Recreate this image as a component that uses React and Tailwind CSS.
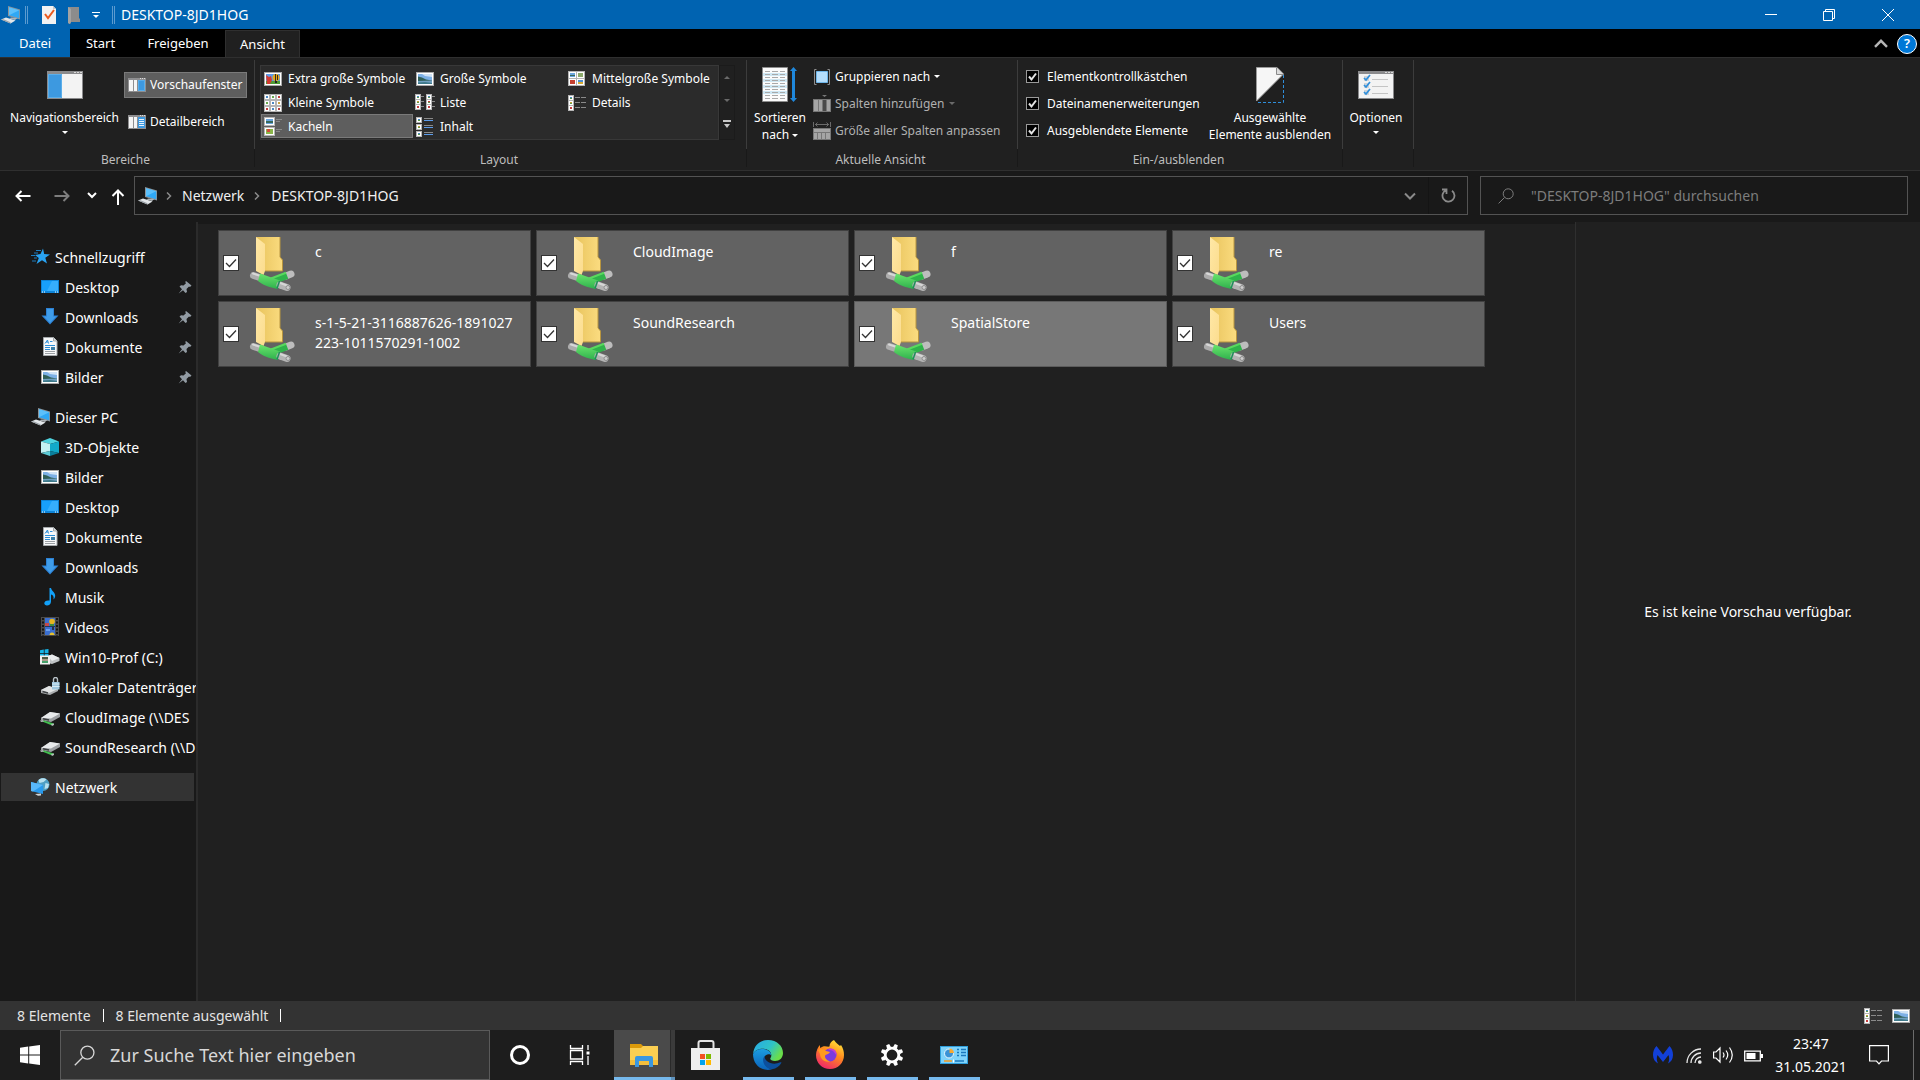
import React from "react";

/* ---------- icons ---------- */

function PcIcon({ className = "" }) {
  return (
    <svg width="20" height="20" viewBox="0 0 20 20" className={className} aria-hidden="true">
      <path d="M7 1 19 4.500V14.500L7 11Z" fill="#8d9499" />
      <path d="M8 2.300 18.200 5.300V13.300L8 10.300Z" fill="#2fa8f5" />
      <path d="M8 2.300 18.200 5.300 8 10.300Z" fill="#5cc0fb" />
      <path d="M10 12.500 16.500 13 14 15 8.500 13.500Z" fill="#aeb4b8" />
      <path d="M0 14.500 5 12.500 14.500 15.500 9.500 18.500Z" fill="#e3e7ea" />
      <path d="M0 14.500 9.500 18.500V17.300L2.500 14.200Z" fill="#9aa1a6" />
    </svg>
  );
}

function StarIcon() {
  return (
    <svg width="20" height="20" viewBox="0 0 20 20" aria-hidden="true">
      <path d="M12 1.500 13.200 7 19 7.500 14.300 10.800 16 16.500 11 13.300 5.500 17 7.800 11 4 8 9.500 7Z" fill="#29a3f2" />
      <path d="M5 3.500H10M3 6H7M0 8.500H4M3 11H6M1 14H5" stroke="#1b7fc4" strokeWidth="1" />
    </svg>
  );
}

function DesktopIcon() {
  return (
    <svg width="20" height="20" viewBox="0 0 20 20" aria-hidden="true">
      <path d="M1 3H19V16H1Z" fill="#0d84d8" />
      <path d="M2 4H18V14H2Z" fill="#18a0fb" />
      <path d="M12 4H18V14H7Z" fill="#36aefc" />
      <path d="M2 15H3M4 15H5M15 15H16M17 15H18" stroke="#fff" strokeWidth="1" />
    </svg>
  );
}

function DownloadIcon() {
  return (
    <svg width="20" height="20" viewBox="0 0 20 20" aria-hidden="true">
      <path d="M6 1H14V8.500H18.500L10 17.500 1.500 8.500H6Z" fill="#2c81d4" />
      <path d="M7 2H13V9.500H16L10 16 4 9.500H7Z" fill="#3f9ce9" />
    </svg>
  );
}

function DocumentIcon() {
  return (
    <svg width="20" height="20" viewBox="0 0 20 20" aria-hidden="true">
      <path d="M3.500 .5H13.500L17 4V18.500H3.500Z" fill="#f7f8f9" stroke="#a4a8ab" />
      <path d="M13.500 .5V4H17" fill="#d5d9dc" stroke="#a4a8ab" />
      <path d="M5 6.500 7.500 3 8.500 6.500M6 5H8" stroke="#2c8ed8" fill="none" />
      <path d="M10 4.500H12.500M5 8.500H15M5 10.500H10M5 12.500H10" stroke="#2c8ed8" />
      <path d="M11 10H15V13H11Z" fill="#3b7fa8" />
      <path d="M5 14.500H15M5 16.500H15" stroke="#9b9fa3" />
    </svg>
  );
}

function PictureIcon({ className = "" }) {
  return (
    <svg width="20" height="20" viewBox="0 0 20 20" className={className} aria-hidden="true">
      <path d="M1 3H19V17H1Z" fill="#a9a9a9" />
      <path d="M2 4H18V16H2Z" fill="#fff" />
      <path d="M3 5H17V15H3Z" fill="#7db0e6" />
      <path d="M7 5H17V8L10 7Z" fill="#cfe2f5" />
      <path d="M3 7.500 7 8.500 11 10.500 17 11.500V12.500H3Z" fill="#2f5f58" />
      <path d="M3 12 17 11.500V15H3Z" fill="#6f9fc0" />
      <path d="M3 13.500 10 13 17 14V15H3Z" fill="#3f7a8a" />
    </svg>
  );
}

function CubeIcon() {
  return (
    <svg width="20" height="20" viewBox="0 0 20 20" aria-hidden="true">
      <path d="M10 1 19 4.500 10 7 1 4.500Z" fill="#4fd3df" />
      <path d="M1 4.500 10 7V14L1 16Z" fill="#c4f2f3" />
      <path d="M10 7 19 4.500V16L10 14Z" fill="#12a9c9" />
      <path d="M1 16 10 14V19Z" fill="#5ccbd6" />
      <path d="M19 16 10 14V19Z" fill="#0a7f9c" />
    </svg>
  );
}

function MusicIcon() {
  return (
    <svg width="20" height="20" viewBox="0 0 20 20" aria-hidden="true">
      <path d="M9.500 1H11C11.500 4 15.500 5.500 15.200 9 15 10.500 14.500 11.500 13.500 12.500 14 9.500 13 8 11 7.500V14.500C11 17 9 18.500 7 18.500 5.300 18.500 4.300 17.500 4.300 16.300 4.300 14.500 6.500 13 9.500 13.600Z" fill="#12a0f7" />
    </svg>
  );
}

function VideoIcon() {
  return (
    <svg width="20" height="20" viewBox="0 0 20 20" aria-hidden="true">
      <path d="M1 0H19V19H1Z" fill="#4b4b4b" />
      <path d="M5 1H15V18H5Z" fill="#3b6fd0" />
      <path d="M5 9H15V10H5Z" fill="#22355c" />
      <circle cx="12" cy="4.500" r="2.800" fill="#e6b51e" />
      <path d="M5 6H9V9H5Z" fill="#c34a4a" />
      <path d="M10 7H14V9H10Z" fill="#3f8b3c" />
      <path d="M12 10H14V13H12Z" fill="#26304a" />
      <path d="M9.500 18A2.500 2.500 0 0 1 14.500 18Z" fill="#e6c22e" />
      <path d="M6 12H10V14H6Z" fill="#6ba1ee" />
      <path d="M3 1V19M17 1V19" stroke="#151515" strokeWidth="2" strokeDasharray="2 1.500" />
    </svg>
  );
}

function WinDriveIcon() {
  return (
    <svg width="20" height="20" viewBox="0 0 20 20" aria-hidden="true">
      <path d="M8 9 12 7.500 19.500 11V14L12 17 8 16Z" fill="#bfc2c4" />
      <path d="M8 9 12 7.500 19.500 11 12 14Z" fill="#e9ebec" />
      <path d="M0 3.200 3.800 2.600V6H0ZM4.600 2.500 8.500 2V6H4.600ZM0 6.800H3.800V9H0ZM4.600 6.800H8.500V9H4.600Z" fill="#16b5e9" />
      <path d="M0 8.500H10V17.500H0Z" fill="#f1f1f1" />
      <path d="M2 10H8V16H2Z" fill="#a99a88" />
      <path d="M2 10H8V12H2Z" fill="#4b5a44" />
      <path d="M2 14H8V16H2Z" fill="#46a06a" />
    </svg>
  );
}

function LockedDriveIcon() {
  return (
    <svg width="20" height="20" viewBox="0 0 20 20" aria-hidden="true">
      <path d="M1 13 9 9 18 12V14L10 18 1 16Z" fill="#aaadaf" />
      <path d="M1 13 9 9 18 12 9 16Z" fill="#e2e4e5" />
      <path d="M2.500 14.500 8 16" stroke="#3f4244" strokeWidth="1.500" />
      <path d="M13.500 5V2.500C13.500 -.2 17.500 -.2 17.500 2.500V5" stroke="#b9c2c8" fill="none" strokeWidth="1.400" />
      <path d="M12 5H19.500V12.500H12Z" fill="#9fc6dd" />
      <path d="M12 7H19.500M12 9.500H19.500" stroke="#d8ebf5" />
    </svg>
  );
}

function NetDriveIcon() {
  return (
    <svg width="20" height="20" viewBox="0 0 20 20" aria-hidden="true">
      <path d="M1 11 10 5 20 6.500V10L11 15 1 13Z" fill="#9da0a3" />
      <path d="M1 11 10 5 20 6.500 11 11.500Z" fill="#e8eaeb" />
      <path d="M3 11.800 9 13" stroke="#3a3d3f" strokeWidth="1.500" />
      <path d="M1 14 4 13.500 14 16.500 12 18.500Z" fill="#43bf50" />
      <path d="M0 13.500 3 13 4 14.500 1 15Z" fill="#b5b8ba" />
      <path d="M11 17 14 16.500 14 18 12 19Z" fill="#b5b8ba" />
    </svg>
  );
}

function NetworkIcon() {
  return (
    <svg width="20" height="20" viewBox="0 0 20 20" aria-hidden="true">
      <circle cx="12" cy="7.500" r="6.500" fill="#4f9fc4" />
      <path d="M7.500 3C9.500 1 13.500 .8 15.500 2.500L12.500 5 8.500 6ZM14.500 6 18 7 17 11 13.500 12Z" fill="#b8e0ef" />
      <path d="M0 5 12 8V17L0 14Z" fill="#2899ec" />
      <path d="M0 5 12 8 2 14.500 0 14Z" fill="#58b8fa" />
      <path d="M4 17 10 16.500 10 18.500 7 18.800Z" fill="#cfd6da" />
    </svg>
  );
}

function PinIcon() {
  return (
    <svg width="14" height="14" viewBox="0 0 14 14" aria-hidden="true">
      <path d="M8 1 13.500 5.500 12 7 11 6.500 8.500 9 9 12 7.500 13 5 10.200 .7 13.500 4 9.200 1.500 6.500 3 5.300 5.500 5.500 8 3.300 7.200 2Z" fill="#929ba3" />
    </svg>
  );
}

function NetFolderIcon() {
  return (
    <svg width="48" height="56" viewBox="0 0 48 56" aria-hidden="true">
      <defs>
        <linearGradient id="fb" x1="0" x2="1">
          <stop offset="0" stopColor="#e8c35c" />
          <stop offset="1" stopColor="#fbdc80" />
        </linearGradient>
        <linearGradient id="ff" x1="0" x2="1" y1="0" y2="1">
          <stop offset="0" stopColor="#ffe8a6" />
          <stop offset="1" stopColor="#fbdc8e" />
        </linearGradient>
        <linearGradient id="fp" x1="0" x2="0" y1="0" y2="1">
          <stop offset="0" stopColor="#d5d5d5" />
          <stop offset="1" stopColor="#9a9a9a" />
        </linearGradient>
        <linearGradient id="fg" x1="0" x2="0" y1="0" y2="1">
          <stop offset="0" stopColor="#6ae56c" />
          <stop offset="1" stopColor="#2fb04d" />
        </linearGradient>
      </defs>
      <path d="M7 1H31V21L33.500 24V35H12Z" fill="url(#fb)" />
      <path d="M31 1V21L33.500 24V35H16" stroke="#b8953f" fill="none" />
      <path d="M7 1 16 8V35L14.500 39 7 35Z" fill="url(#ff)" />
      <path d="M37 40 42 38" stroke="#bdbdbd" strokeWidth="7" strokeLinecap="round" />
      <path d="M24 45 38 39.500" stroke="#2fb34a" strokeWidth="7" />
      <path d="M22 42.500 37 36.800" stroke="#58d95e" strokeWidth="2" />
      <path d="M4.500 39.500 12 42" stroke="#adadad" strokeWidth="7" strokeLinecap="round" />
      <path d="M4 37.500 11 39.800" stroke="#d8d8d8" strokeWidth="2" strokeLinecap="round" />
      <path d="M11 37.500 31 44.500 28.500 53C20 51.500 13 48.500 9 45Z" fill="url(#fg)" />
      <path d="M31 49 38 51.500" stroke="#b4b4b4" strokeWidth="7" strokeLinecap="round" />
      <path d="M31 47 38 49.500" stroke="#d6d6d6" strokeWidth="2" />
      <path d="M30.500 45 28 52.500" stroke="#1e8f5a" strokeWidth="1.500" />
      <circle cx="39" cy="51.500" r="2" fill="#cdcdcd" stroke="#909090" />
    </svg>
  );
}

function WindowFrame({ children, w = 36, h = 28 }) {
  return (
    <svg width={w} height={h} viewBox="0 0 36 28" aria-hidden="true">
      <path d="M0 0H36V28H0Z" fill="#8a8a8c" />
      <path d="M1 3H35V27H1Z" fill="#f3f3f3" />
      <path d="M27 1.500H29M30 1.500H32M33 1.500H35" stroke="#d9d9d9" />
      {children}
    </svg>
  );
}

function NavPaneIcon() {
  return (
    <WindowFrame>
      <path d="M1 3H15V27H1Z" fill="#3d99e0" />
      <path d="M1.500 3.500H14.500V26.500H1.500Z" fill="none" stroke="#5aaeea" />
    </WindowFrame>
  );
}

function PaneIcon({ detail }) {
  return (
    <svg width="18" height="14" viewBox="0 0 18 14" aria-hidden="true">
      <path d="M0 0H18V14H0Z" fill="#8f8f91" />
      <path d="M1 2H5V13H1ZM6 2H9V13H6Z" fill="#f5f5f5" />
      <path d="M10 2H17V13H10Z" fill="#3d99e0" />
      <path d="M12 .5H13M14 .5H15M16 .5H17" stroke="#ddd" />
      {detail ? (
        <path d="M11 4.500H16M11 6.500H16M11 8.500H16M11 10.500H16" stroke="#e8f4fd" />
      ) : (
        <path d="M10.500 2.500H16.500V12.500H10.500Z" fill="none" stroke="#5aaeea" />
      )}
    </svg>
  );
}

function Thumb({ x, y, c = "#4b88c4", g = "#5f9a4c" }) {
  return (
    <g>
      <rect x={x} y={y} width="6" height="6" fill="#b5b5b5" />
      <rect x={x + 1} y={y + 1} width="4" height="4" fill="#fff" />
      <rect x={x + 2} y={y + 2} width="2" height="2" fill={c} />
      <rect x={x + 2} y={y + 3} width="2" height="1" fill={g} />
    </g>
  );
}

function ExtraLargeIcon() {
  return (
    <svg width="20" height="20" viewBox="0 0 20 20" aria-hidden="true">
      <path d="M1 3H19V17H1Z" fill="#a9a9a9" />
      <path d="M2 4H18V16H2Z" fill="#fff" />
      <path d="M3 5H17V15H3Z" fill="#5d9bea" />
      <path d="M3 12H17V15H3Z" fill="#4d9b35" />
      <path d="M3 6 6 8 8 7 9 11 7 15H4Z" fill="#d33b31" />
      <circle cx="13" cy="8.500" r="3.500" fill="#e5a91c" />
      <path d="M12 5H13V12H12ZM14 6H15V11H14Z" fill="#3b2b18" />
      <path d="M12 12H14V14H12Z" fill="#222" />
    </svg>
  );
}

function SmallIconsIcon() {
  const cols = ["#4b88c4", "#69a94e", "#c43e3e", "#69a94e", "#4b88c4", "#c9a13d", "#c43e3e", "#4b88c4", "#b53a3a"];
  return (
    <svg width="20" height="20" viewBox="0 0 20 20" aria-hidden="true">
      {cols.map((c, i) => (
        <Thumb key={i} x={(i % 3) * 6 + 1} y={Math.floor(i / 3) * 6 + 1} c={c} g={c} />
      ))}
    </svg>
  );
}

function TilesIcon() {
  return (
    <svg width="20" height="20" viewBox="0 0 20 20" aria-hidden="true">
      <path d="M1 0H12V9H1ZM1 10H12V19H1Z" fill="#b5b5b5" />
      <path d="M2 1H11V8H2ZM2 11H11V18H2Z" fill="#fff" />
      <path d="M3 2H10V7H3Z" fill="#6aa5dd" />
      <path d="M3 4H10V6H3Z" fill="#38695c" />
      <path d="M3 12H10V17H3Z" fill="#8ab54a" />
      <path d="M4 12H7V15H4Z" fill="#d04b38" />
      <path d="M13 2.500H19M13 4.500H17M13 12.500H19M13 14.500H17" stroke="#8a8a8a" />
    </svg>
  );
}

function ListViewIcon() {
  return (
    <svg width="20" height="20" viewBox="0 0 20 20" aria-hidden="true">
      <Thumb x={0} y={1} />
      <Thumb x={0} y={6} c="#c9a13d" />
      <Thumb x={0} y={11} c="#c43e3e" g="#c43e3e" />
      <Thumb x={11} y={1} />
      <Thumb x={11} y={6} c="#c43e3e" />
      <Thumb x={11} y={11} c="#c43e3e" g="#c43e3e" />
      <path d="M6 3.500H9M6 8.500H9M6 13.500H9M17 3.500H20M17 8.500H20M17 13.500H20" stroke="#8a8a8a" />
    </svg>
  );
}

function ContentIcon() {
  return (
    <svg width="20" height="20" viewBox="0 0 20 20" aria-hidden="true">
      <Thumb x={1} y={0} />
      <Thumb x={1} y={7} c="#c9a13d" />
      <Thumb x={1} y={14} />
      <path d="M9 1.500H18M9 8.500H18M9 15.500H18" stroke="#8a8a8a" />
      <path d="M9 3.500H18M9 10.500H18M9 17.500H18" stroke="#5b9bea" />
    </svg>
  );
}

function MediumIcon() {
  return (
    <svg width="20" height="20" viewBox="0 0 20 20" aria-hidden="true">
      <path d="M1 2H18V17H1Z" fill="#b5b5b5" />
      <path d="M2 3H9V9H2ZM10 3H17V9H10ZM2 10H9V16H2ZM10 10H17V16H10Z" fill="#fff" />
      <path d="M3 4H8V8H3Z" fill="#6aa5dd" />
      <path d="M11 4H16V8H11Z" fill="#8aa86a" />
      <path d="M3 11H8V15H3Z" fill="#c5402f" />
      <path d="M11 11H16V15H11Z" fill="#4f8fd2" />
      <path d="M11 13H16V15H11Z" fill="#d8ab30" />
      <path d="M3 6H8V7H3Z" fill="#38695c" />
    </svg>
  );
}

function DetailsIcon({ className = "" }) {
  return (
    <svg width="20" height="20" viewBox="0 0 20 20" className={className} aria-hidden="true">
      <Thumb x={1} y={2} />
      <Thumb x={1} y={7} c="#c9a13d" />
      <Thumb x={1} y={12} c="#c43e3e" g="#c43e3e" />
      <path d="M8 4.500H13M14 4.500H19M8 9.500H13M14 9.500H19M8 14.500H13M14 14.500H19" stroke="#8a8a8a" />
    </svg>
  );
}

function SortIcon() {
  return (
    <svg width="36" height="36" viewBox="0 0 36 36" aria-hidden="true">
      <path d="M.5 .5H25.500V34.500H.5Z" fill="#fbfbfb" stroke="#8d8d8d" />
      <path d="M1 6H25V9H1ZM1 12H25V15H1ZM1 18H25V21H1ZM1 24H25V27H1Z" fill="#cfe8f4" />
      <path
        d="M3 4.500H8M10 4.500H16M18 4.500H23M3 7.500H8M10 7.500H16M18 7.500H23M3 10.500H8M10 10.500H16M18 10.500H23M3 13.500H8M10 13.500H16M18 13.500H23M3 16.500H8M10 16.500H16M18 16.500H23M3 19.500H8M10 19.500H16M18 19.500H23M3 22.500H8M10 22.500H16M18 22.500H23M3 25.500H8M10 25.500H16M18 25.500H23M3 28.500H8M10 28.500H16M18 28.500H23M3 31.500H8M10 31.500H16M18 31.500H23"
        stroke="#a9a9a9"
      />
      <path d="M31.500 0 35 4H33V31H35L31.500 35 28 31H30V4H28Z" fill="#1f88dc" />
    </svg>
  );
}

function GroupIcon() {
  return (
    <svg width="18" height="18" viewBox="0 0 18 18" aria-hidden="true">
      <path d="M3.500 1.500H1.500V16.500H3.500M14.500 1.500H16.500V16.500H14.500" fill="none" stroke="#8d8d8d" />
      <path d="M3.500 3.500H14.500V14.500H3.500Z" fill="#b5defc" stroke="#6fb6ea" />
    </svg>
  );
}

function AddColumnsIcon() {
  return (
    <svg width="18" height="18" viewBox="0 0 18 18" aria-hidden="true">
      <path d="M0 4H18V17H0Z" fill="#777" />
      <path d="M1 5H5V16H1ZM6 5H9V16H6ZM14 5H17V16H14Z" fill="#a5a5a5" />
      <path d="M10 5H13V16H10Z" fill="#4a4a4a" />
      <path d="M9 0H14L11.500 2Z" fill="#777" />
    </svg>
  );
}

function SizeColumnsIcon() {
  return (
    <svg width="18" height="18" viewBox="0 0 18 18" aria-hidden="true">
      <path d="M.5 0V5M17.500 0V5M2 2.500H16M4.500 .5 2.500 2.500 4.500 4.500M13.500 .5 15.500 2.500 13.500 4.500" stroke="#6a6a6a" fill="none" />
      <path d="M0 6H18V18H0Z" fill="#777" />
      <path d="M1 7H17V10H1ZM1 11H4V17H1ZM5 11H8V17H5ZM9 11H12V17H9ZM13 11H17V17H13Z" fill="#a5a5a5" />
    </svg>
  );
}

function HideIcon() {
  return (
    <svg width="28" height="36" viewBox="0 0 28 36" aria-hidden="true">
      <path d="M.5 .5H21L27.500 7 .5 34Z" fill="#f6f6f6" stroke="#9a9a9a" />
      <path d="M20.500 .5V7.500H27.500" fill="#dcdcdc" stroke="#8a8a8a" />
      <path d="M27.500 8V35.500H1" fill="none" stroke="#2f8fdc" strokeDasharray="3 2" />
    </svg>
  );
}

function OptionsIcon() {
  return (
    <WindowFrame>
      {[7, 14, 21].map((y) => (
        <g key={y}>
          <rect x="6" y={y - 2} width="5" height="5" fill="#d0d4d8" />
          <path d={`M6 ${y} 8 ${y + 2} 12 ${y - 3}`} stroke="#2f8fdc" strokeWidth="1.700" fill="none" />
          <path d={`M14 ${y + 1.5}H30`} stroke="#c4c4c4" />
        </g>
      ))}
    </WindowFrame>
  );
}

function Caret({ className = "" }) {
  return (
    <svg width="6" height="3" viewBox="0 0 6 3" className={className} aria-hidden="true">
      <path d="M0 0H6L3 3Z" fill="currentColor" />
    </svg>
  );
}

function SearchGlyph({ size = 16, className = "" }) {
  return (
    <svg width={size} height={size} viewBox="0 0 16 16" fill="none" stroke="currentColor" className={className} aria-hidden="true">
      <circle cx="10.200" cy="5.800" r="5" />
      <path d="M6.500 9.500 .6 15.400" />
    </svg>
  );
}

/* ---------- title bar and tabs ---------- */

function TitleBar() {
  return (
    <header className="flex h-[29px] items-center bg-[#0063b1] text-white">
      <PcIcon className="ml-px" />
      <span className="ml-1 h-[18px] w-[3px] border-x border-[#5c9bd0]" />
      <button aria-label="Eigenschaften" className="ml-[14px]">
        <svg width="14" height="18" viewBox="0 0 14 18">
          <path d="M0 0H11L14 3V18H0Z" fill="#f2f2f2" />
          <path d="M11 0V3H14" fill="#c9c9c9" />
          <path d="M3 8 6 12 12 4" fill="none" stroke="#ea5a1e" strokeWidth="2" />
        </svg>
      </button>
      <button aria-label="Neuer Ordner" className="ml-3">
        <svg width="12" height="18" viewBox="0 0 12 18">
          <path d="M0 1H11V12L12 13V16H3L2 18 0 17Z" fill="#8c8c8c" />
          <path d="M0 1 3 3V16L2 18 0 17Z" fill="#a3a3a3" />
        </svg>
      </button>
      <button aria-label="Symbolleiste anpassen" className="ml-3">
        <svg width="8" height="8" viewBox="0 0 8 8">
          <path d="M0 1.500H8" stroke="#fff" />
          <path d="M1 4H7L4 7Z" fill="#fff" />
        </svg>
      </button>
      <span className="ml-3 h-[18px] w-[3px] border-x border-[#5c9bd0]" />
      <h1 className="ml-[6px] text-[14px]">DESKTOP-8JD1HOG</h1>
      <div className="ml-auto flex h-full pr-[2px]">
        <button aria-label="Minimieren" className="flex w-[58px] items-center justify-center">
          <span className="h-px w-3 bg-white" />
        </button>
        <button aria-label="Verkleinern" className="flex w-[58px] items-center justify-center">
          <svg width="12" height="12" viewBox="0 0 12 12" fill="none" stroke="#fff">
            <path d="M.5 2.500H9.500V11.500H.5ZM2.500 2.500V.5H11.500V9.500H9.500" />
          </svg>
        </button>
        <button aria-label="Schließen" className="flex w-[60px] items-center justify-center">
          <svg width="12" height="12" viewBox="0 0 12 12" fill="none" stroke="#fff">
            <path d="M0 0 12 12M12 0 0 12" />
          </svg>
        </button>
      </div>
    </header>
  );
}

function Tabs() {
  return (
    <div className="flex h-7 bg-black pt-px text-[13px] text-white" role="tablist">
      <button role="tab" className="-mt-px w-[70px] bg-[#0063b1] pt-px">Datei</button>
      <button role="tab" className="w-[61px]">Start</button>
      <button role="tab" className="w-[94px]">Freigeben</button>
      <button role="tab" aria-selected="true" className="-mb-px w-[75px] border border-b-0 border-[#2f2f2f] bg-[#202020]">
        Ansicht
      </button>
      <div className="ml-auto flex items-center gap-[9px] pr-[3px]">
        <button aria-label="Menüband minimieren">
          <svg width="14" height="9" viewBox="0 0 14 9" fill="none" stroke="#b5b5b5" strokeWidth="2.400">
            <path d="M1 7.800 7 1.800 13 7.800" />
          </svg>
        </button>
        <button aria-label="Hilfe" className="flex size-5 items-center justify-center rounded-full border border-white bg-[#0078d7] text-[13px] font-semibold leading-none">
          ?
        </button>
      </div>
    </div>
  );
}

/* ---------- ribbon ---------- */

function Group({ label, className = "", children }) {
  return (
    <section className={`flex flex-col ${className}`}>
      <div className="flex h-[89px] border-r border-[#3c3c3c]">{children}</div>
      <div className="h-[18px] border-r border-[#191919] pr-[3px] text-center text-[12px] leading-[22px] text-[#bdbdbd]">{label}</div>
    </section>
  );
}

function GalleryItem({ icon, label, active }) {
  return (
    <button
      aria-pressed={!!active}
      className={`flex h-6 items-center gap-[5px] whitespace-nowrap border pl-px pt-[2px] text-left ${
        active ? "border-[#7a7a7a] bg-[#5e5e5e]" : "border-transparent"
      }`}
    >
      {icon}
      {label}
    </button>
  );
}

function RibbonCheck({ label }) {
  return (
    <label className="flex h-[27px] items-center gap-2">
      <span className="relative flex">
        <input type="checkbox" defaultChecked className="size-[13px] appearance-none border border-[#9a9a9a] bg-black" />
        <svg width="13" height="13" viewBox="0 0 13 13" className="pointer-events-none absolute inset-0">
          <path d="M3 6.500 5.500 9.500 10 3.500" fill="none" stroke="#e4e4e4" strokeWidth="2" />
        </svg>
      </span>
      <span className="pt-px">{label}</span>
    </label>
  );
}

function Ribbon() {
  return (
    <div className="flex h-[114px] border-y border-[#2f2f2f] bg-[#202020] pt-[2px] text-[12px] text-white">
      <Group label="Bereiche" className="w-[255px]">
        <button className="flex w-[119px] flex-col items-center pl-[10px] pt-[11px]">
          <NavPaneIcon />
          <span className="mt-[10px] leading-[17px]">Navigationsbereich</span>
          <Caret className="mt-[5px] shrink-0" />
        </button>
        <div className="ml-[5px] flex flex-col gap-[10px] whitespace-nowrap pt-3">
          <button aria-pressed="true" className="flex h-[26px] w-[123px] items-center gap-1 border border-[#7a7a7a] bg-[#5e5e5e] pl-[3px]">
            <PaneIcon />
            Vorschaufenster
          </button>
          <button className="flex h-[26px] items-center gap-1 pl-1 pt-px">
            <PaneIcon detail />
            Detailbereich
          </button>
        </div>
      </Group>

      <Group label="Layout" className="w-[492px]">
        <div className="ml-[5px] mt-[5px] grid h-[75px] w-[459px] grid-cols-[152px_152px_153px] grid-rows-[24px_24px_24px] border border-[#383838] bg-[#2b2b2b]">
          <GalleryItem icon={<ExtraLargeIcon />} label="Extra große Symbole" />
          <GalleryItem icon={<PictureIcon />} label="Große Symbole" />
          <GalleryItem icon={<MediumIcon />} label="Mittelgroße Symbole" />
          <GalleryItem icon={<SmallIconsIcon />} label="Kleine Symbole" />
          <GalleryItem icon={<ListViewIcon />} label="Liste" />
          <GalleryItem icon={<DetailsIcon />} label="Details" />
          <GalleryItem icon={<TilesIcon />} label="Kacheln" active />
          <GalleryItem icon={<ContentIcon />} label="Inhalt" />
        </div>
        <div className="mt-[5px] flex h-[75px] w-4 flex-col border border-[#1b1b1b] text-[#6a6a6a]">
          <button aria-label="Nach oben" className="flex flex-1 items-center justify-center">
            <Caret className="rotate-180" />
          </button>
          <button aria-label="Nach unten" className="flex flex-1 items-center justify-center">
            <Caret />
          </button>
          <button aria-label="Mehr" className="flex flex-1 items-center justify-center pb-1 text-[#c8c8c8]">
            <svg width="8" height="8" viewBox="0 0 8 8">
              <path d="M0 0H8V2H0ZM1 4H7L4 8Z" fill="currentColor" />
            </svg>
          </button>
        </div>
      </Group>

      <Group label="Aktuelle Ansicht" className="w-[271px]">
        <button className="flex w-[66px] flex-col items-center pt-[7px]">
          <SortIcon />
          <span className="mt-[6px] leading-[17px]">
            Sortieren
            <br />
            nach <Caret className="inline align-middle" />
          </span>
        </button>
        <div className="flex flex-col items-start whitespace-nowrap pt-[3px]">
          <button className="flex h-[27px] items-center gap-1">
            <GroupIcon />
            Gruppieren nach <Caret />
          </button>
          <button disabled className="flex h-[27px] items-center gap-1 text-[#b0b0b0]">
            <AddColumnsIcon />
            Spalten hinzufügen <Caret className="text-[#6a6a6a]" />
          </button>
          <button disabled className="flex h-[27px] items-center gap-1 text-[#b0b0b0]">
            <SizeColumnsIcon />
            Größe aller Spalten anpassen
          </button>
        </div>
      </Group>

      <Group label="Ein-/ausblenden" className="w-[325px]">
        <div className="flex w-[182px] flex-col whitespace-nowrap pl-2 pt-[3px]">
          <RibbonCheck label="Elementkontrollkästchen" />
          <RibbonCheck label="Dateinamenerweiterungen" />
          <RibbonCheck label="Ausgeblendete Elemente" />
        </div>
        <button className="flex w-[140px] flex-col items-center whitespace-nowrap pt-[7px]">
          <HideIcon />
          <span className="mt-[6px] leading-[17px]">
            Ausgewählte
            <br />
            Elemente ausblenden
          </span>
        </button>
      </Group>

      <Group label="" className="w-[71px]">
        <button className="flex w-[66px] flex-col items-center pt-[11px]">
          <OptionsIcon />
          <span className="mt-[10px] leading-[17px]">Optionen</span>
          <Caret className="mt-[5px] shrink-0" />
        </button>
      </Group>
    </div>
  );
}

/* ---------- address bar ---------- */

function ArrowIcon({ className }) {
  return (
    <svg width="16" height="12" viewBox="0 0 16 12" fill="none" stroke="currentColor" strokeWidth="2" className={className} aria-hidden="true">
      <path d="M15.500 6H1.500M6.500 1 1.500 6 6.500 11" />
    </svg>
  );
}

function Chevron({ className = "" }) {
  return (
    <svg width="6" height="8" viewBox="0 0 6 8" fill="none" stroke="#8a8a8a" strokeWidth="1.500" className={className} aria-hidden="true">
      <path d="M1 .5 4.500 4 1 7.500" />
    </svg>
  );
}

function AddressRow() {
  return (
    <div className="flex h-[51px] items-start bg-[#191919] pt-[5px] pr-3 text-[14px] text-[#f0f0f0]">
      <div className="flex h-[39px] w-[134px] items-center pl-[15px] text-white">
        <button aria-label="Zurück"><ArrowIcon /></button>
        <button aria-label="Vorwärts" className="ml-[23px] text-[#7e7e7e]"><ArrowIcon className="rotate-180" /></button>
        <button aria-label="Zuletzt verwendet" className="ml-[17px]">
          <svg width="10" height="7" viewBox="0 0 10 7" fill="none" stroke="currentColor" strokeWidth="2">
            <path d="M1 1 5 5 9 1" />
          </svg>
        </button>
        <button aria-label="Nach oben" className="ml-[14px] mt-[3px]">
          <svg width="14" height="16" viewBox="0 0 14 16" fill="none" stroke="currentColor" strokeWidth="2">
            <path d="M7 16V1.500M1.500 7 7 1.500 12.500 7" />
          </svg>
        </button>
      </div>
      <nav aria-label="Adressleiste" className="flex h-[39px] flex-1 items-center border border-[#535353] pl-[3px]">
        <PcIcon />
        <Chevron className="ml-2" />
        <a href="#netzwerk" className="ml-[10px]">Netzwerk</a>
        <Chevron className="ml-[10px]" />
        <a href="#desktop" className="ml-[11px]">DESKTOP-8JD1HOG</a>
        <button aria-label="Vorherige Speicherorte" className="ml-auto text-[#8a8a8a]">
          <svg width="12" height="8" viewBox="0 0 12 8" fill="none" stroke="currentColor" strokeWidth="2">
            <path d="M1 1.500 6 6.500 11 1.500" />
          </svg>
        </button>
        <button aria-label="Aktualisieren" className="ml-3 flex h-full w-[39px] items-center justify-center border-l border-[#141414] text-[#8a8a8a]">
          <svg width="15" height="15" viewBox="0 0 15 15" fill="none" stroke="currentColor" strokeWidth="1.800">
            <path d="M5 2.200A6 6 0 1 0 11 2.800M1 1.500H5.500V6" />
          </svg>
        </button>
      </nav>
      <div className="ml-3 flex h-[39px] w-[428px] items-center border border-[#535353] text-[#7d7d7d]">
        <SearchGlyph className="ml-[17px]" />
        <input
          type="search"
          aria-label="Durchsuchen"
          placeholder={'"DESKTOP-8JD1HOG" durchsuchen'}
          className="ml-[17px] flex-1 bg-transparent outline-none placeholder:text-[#7d7d7d]"
        />
      </div>
    </div>
  );
}

/* ---------- sidebar ---------- */

function NavItem({ icon, label, root, pinned, active }) {
  return (
    <li className={`h-[30px] ${active ? "pb-[2px] pl-px pr-[2px]" : "pl-px"}`}>
      <a
        href="#ort"
        className={`flex h-full items-center overflow-hidden whitespace-nowrap ${root ? "gap-[4px] pl-[30px]" : "gap-[5px] pl-[39px]"} ${
          active ? "bg-[#333]" : ""
        }`}
      >
        <span className="shrink-0">{icon}</span>
        <span className="flex-1">{label}</span>
        {pinned && (
          <span className="mr-1">
            <PinIcon />
          </span>
        )}
      </a>
    </li>
  );
}

function Sidebar() {
  return (
    <aside className="w-[198px] shrink-0 border-r-2 border-[#2b2b2b] bg-[#191919] pt-5 text-[14px] text-white">
      <ul className="mb-[10px]">
        <NavItem root icon={<StarIcon />} label="Schnellzugriff" />
        <NavItem pinned icon={<DesktopIcon />} label="Desktop" />
        <NavItem pinned icon={<DownloadIcon />} label="Downloads" />
        <NavItem pinned icon={<DocumentIcon />} label="Dokumente" />
        <NavItem pinned icon={<PictureIcon />} label="Bilder" />
      </ul>
      <ul className="mb-[11px]">
        <NavItem root icon={<PcIcon />} label="Dieser PC" />
        <NavItem icon={<CubeIcon />} label="3D-Objekte" />
        <NavItem icon={<PictureIcon />} label="Bilder" />
        <NavItem icon={<DesktopIcon />} label="Desktop" />
        <NavItem icon={<DocumentIcon />} label="Dokumente" />
        <NavItem icon={<DownloadIcon />} label="Downloads" />
        <NavItem icon={<MusicIcon />} label="Musik" />
        <NavItem icon={<VideoIcon />} label="Videos" />
        <NavItem icon={<WinDriveIcon />} label="Win10-Prof (C:)" />
        <NavItem icon={<LockedDriveIcon />} label="Lokaler Datenträger" />
        <NavItem icon={<NetDriveIcon />} label="CloudImage (\\DES" />
        <NavItem icon={<NetDriveIcon />} label="SoundResearch (\\D" />
      </ul>
      <ul>
        <NavItem root active icon={<NetworkIcon />} label="Netzwerk" />
      </ul>
    </aside>
  );
}

/* ---------- files ---------- */

const FILES = [
  "c",
  "CloudImage",
  "f",
  "re",
  "s-1-5-21-3116887626-1891027223-1011570291-1002",
  "SoundResearch",
  "SpatialStore",
  "Users",
];

function Tile({ name, focused }) {
  return (
    <label
      className={`flex h-[66px] border pl-1 ${
        focused ? "border-[#5c5c5c] bg-[#777]" : "border-[#414141] bg-[#626262]"
      }`}
    >
      <span className="relative mt-6 flex size-4 shrink-0">
        <input type="checkbox" defaultChecked className="size-4 appearance-none border border-[#333] bg-white" />
        <svg width="16" height="16" viewBox="0 0 16 16" className="pointer-events-none absolute inset-0">
          <path d="M3 8 6.500 11.500 13 4.500" fill="none" stroke="#333" strokeWidth="1.300" />
        </svg>
      </span>
      <span className="ml-[10px] mt-[5px] shrink-0">
        <NetFolderIcon />
      </span>
      <span className="ml-[18px] mt-[11px] w-[204px] break-all leading-5">{name}</span>
    </label>
  );
}

function Content() {
  return (
    <div className="flex min-h-0 flex-1">
      <Sidebar />
      <main className="flex-1 border-t-2 border-[#191919] bg-[#202020] pl-5 pt-[6px] text-[14px] text-white">
        <div className="grid grid-cols-[repeat(auto-fill,313px)] gap-[5px]">
          {FILES.map((n) => (
            <Tile key={n} name={n} focused={n === "SpatialStore"} />
          ))}
        </div>
      </main>
      <aside className="flex w-[345px] shrink-0 items-center justify-center border-l border-[#2f2f2f] bg-[#202020] text-[14px] text-white">
        Es ist keine Vorschau verfügbar.
      </aside>
    </div>
  );
}

function StatusBar() {
  return (
    <footer className="flex h-[29px] items-center bg-[#333] pl-[17px] pr-[9px] text-[14px] text-[#e4e4e4]">
      <span>8 Elemente</span>
      <span className="mx-3 h-[13px] w-px bg-white" />
      <span>8 Elemente ausgewählt</span>
      <span className="mx-3 h-[13px] w-px bg-white" />
      <button aria-label="Details" className="ml-auto"><DetailsIcon /></button>
      <button aria-label="Große Symbole" className="ml-[8px]"><PictureIcon /></button>
    </footer>
  );
}

/* ---------- taskbar ---------- */

function ExplorerLogo() {
  return (
    <svg width="28" height="24" viewBox="0 0 28 24" aria-hidden="true">
      <path d="M0 1H11L13 3V7H0Z" fill="#dc9a0a" />
      <path d="M0 5H11L13 3H28V22H0Z" fill="#fbcf52" />
      <path d="M0 17H28V22H0Z" fill="#f3be3c" />
      <path d="M5 24V15Q5 13 7 13H21Q23 13 23 15V24H19V18H9V24Z" fill="#3a97e0" />
    </svg>
  );
}

function StoreLogo() {
  return (
    <svg width="30" height="30" viewBox="0 0 30 30" aria-hidden="true">
      <path d="M7.500 9V3Q7.500 1 9.500 1H20.500Q22.500 1 22.500 3V9" fill="none" stroke="#e5e5e5" strokeWidth="2" />
      <path d="M0 8H29V30H0Z" fill="#eeeeee" />
      <path d="M9 14H14V19H9Z" fill="#f25022" />
      <path d="M15 14H20V19H15Z" fill="#7fba00" />
      <path d="M9 20H14V25H9Z" fill="#00a4ef" />
      <path d="M15 20H20V25H15Z" fill="#ffb900" />
    </svg>
  );
}

function EdgeLogo() {
  return (
    <svg width="30" height="30" viewBox="0 0 30 30" aria-hidden="true">
      <defs>
        <linearGradient id="ea" x1="0" x2="1" y1="0" y2=".5">
          <stop offset="0" stopColor="#27a8e8" />
          <stop offset=".6" stopColor="#2fc3c6" />
          <stop offset="1" stopColor="#6ade4a" />
        </linearGradient>
        <linearGradient id="eb" x1="0" x2="0" y1="0" y2="1">
          <stop offset="0" stopColor="#1b9de2" />
          <stop offset="1" stopColor="#0b62b8" />
        </linearGradient>
      </defs>
      <path d="M0 14C1 5 7 0 15 0 24 0 30 6 30 13 30 18 26.500 21 22 21 18.500 21 16.500 19.500 17.500 18 19.500 15 18 10 12 9 7 8.300 2 10 0 14Z" fill="url(#ea)" />
      <path d="M0 14C2 10 6 8.500 10.500 9 15.500 9.500 18.500 12.500 18.200 15.500 17 13.500 12 14 11 18 10 23 14 28.500 19 29.300 9 32 0 25 0 14Z" fill="url(#eb)" />
      <path d="M11.500 16C8 21 11.500 28.500 19 29.300 23.500 28.500 26.500 26 28.300 23 28.600 22.300 28 22 27.500 22.300 19 26 11.500 21.500 11.500 16Z" fill="#0c4f9c" />
    </svg>
  );
}

function FirefoxLogo() {
  return (
    <svg width="30" height="30" viewBox="0 0 30 30" aria-hidden="true">
      <defs>
        <linearGradient id="xa" x1=".8" x2=".3" y1="0" y2="1">
          <stop offset="0" stopColor="#ffe83a" />
          <stop offset=".45" stopColor="#ff8a1e" />
          <stop offset="1" stopColor="#f0256a" />
        </linearGradient>
      </defs>
      <path d="M19 0C21 3 23 4 25 6L26 5C28 8 29 11 29 15 29 23 23 29 15 29 7 29 1 23 1 15 1 11 3 7 5 5V8L8 6.500C11 6 13 7 14.500 6.500 14.500 3.500 16.500 1 19 0Z" fill="url(#xa)" />
      <circle cx="15" cy="15" r="6.500" fill="#7a3be0" />
      <path d="M15 8.500C20 8.500 22 12 21.500 15.500L19 12C17 10 15 10 13 10Z" fill="#c33fd0" />
      <path d="M3 10C6 8 9 9 11 11L15 12C14 14 12 14 10.500 15 9 17 11 20 15 21.500 9 23 5 18 5 14Z" fill="#ff9a1f" />
    </svg>
  );
}

function GearLogo() {
  return (
    <svg width="24" height="24" viewBox="-12 -12 24 24" aria-hidden="true">
      <circle r="6.800" fill="none" stroke="#fff" strokeWidth="2.800" />
      {[0, 45, 90, 135, 180, 225, 270, 315].map((a) => (
        <path key={a} d="M-2.200 -7.500 -1.600 -11.300H1.600L2.200 -7.500Z" fill="#fff" transform={`rotate(${a + 22.5})`} />
      ))}
    </svg>
  );
}

function ControlPanelLogo() {
  return (
    <svg width="28" height="18" viewBox="0 0 28 18" aria-hidden="true">
      <path d="M0 0H28V18H0Z" fill="#2f9fdc" />
      <path d="M1 1H27V17H1Z" fill="#7fd3fb" />
      <circle cx="9" cy="7.500" r="4.500" fill="#3a92d6" stroke="#e8f7ff" />
      <path d="M9.500 7V2.500A4.500 4.500 0 0 1 14 7Z" fill="#f7a832" />
      <path d="M17 3.500H19M21 3.500H26M17 6.500H19M21 6.500H26M17 9.500H19M21 9.500H26" stroke="#1b78bd" strokeWidth="1.500" />
      <path d="M4 15H12" stroke="#f39a1f" strokeWidth="1.500" />
      <path d="M15 15H24" stroke="#1b78bd" strokeWidth="1.500" />
      <path d="M13 13.500H14V16.500H13Z" fill="#fff" />
    </svg>
  );
}

function TaskApp({ label, running, children }) {
  return (
    <button aria-label={label} className="flex h-full w-[62px] flex-col items-center">
      <span className="flex flex-1 items-center pt-[2px]">{children}</span>
      <span className={`h-[3px] w-[51px] ${running ? "bg-[#76b9ed]" : "bg-transparent"}`} />
    </button>
  );
}

function Taskbar() {
  return (
    <div className="flex h-[50px] shrink-0 items-stretch bg-[#1d1d1d] text-white">
      <button aria-label="Start" className="flex w-[60px] items-center justify-center">
        <svg width="20" height="20" viewBox="0 0 20 20" fill="#fff">
          <path d="M0 2.800 8.200 1.600V9.500H0ZM9.200 1.500 20 0V9.500H9.200ZM0 10.500H8.200V18.400L0 17.200ZM9.200 10.500H20V20L9.200 18.500Z" />
        </svg>
      </button>
      <div className="flex w-[430px] items-center border border-[#5a5a5a] bg-[#333] pl-[13px] text-[#d8d8d8]">
        <SearchGlyph size={21} />
        <input
          type="search"
          aria-label="Suche"
          placeholder="Zur Suche Text hier eingeben"
          className="ml-[15px] flex-1 bg-transparent text-[18px] outline-none placeholder:text-[#d8d8d8]"
        />
      </div>
      <button aria-label="Cortana" className="flex w-[60px] items-center justify-center">
        <span className="size-5 rounded-full border-[3px] border-white" />
      </button>
      <button aria-label="Taskansicht" className="flex w-[60px] items-center justify-center">
        <svg width="22" height="20" viewBox="0 0 22 20" fill="none" stroke="#fff" strokeWidth="1.300">
          <path d="M1.500 0V3.500H13.500V0M1.500 5.500H13.500V14H1.500ZM1.500 20V16.500H13.500V20M19 0V5M19 11V20" />
          <path d="M17.500 6.500H20.500V9.500H17.500Z" fill="#fff" stroke="none" />
        </svg>
      </button>
      <button aria-label="Explorer" className="ml-1 flex w-[61px] flex-col bg-[#4a4a4a]">
        <span className="flex w-full flex-1">
          <span className="flex w-[57px] items-center justify-center border-r border-[#2a2a2a] pt-[2px] pl-1">
            <ExplorerLogo />
          </span>
          <span className="flex-1 bg-[#3b3b3b]" />
        </span>
        <span className="flex h-[3px] w-full border-r-4 border-[#5f93bd] bg-[#76b9ed]" />
      </button>
      <TaskApp label="Microsoft Store"><StoreLogo /></TaskApp>
      <TaskApp label="Edge" running><EdgeLogo /></TaskApp>
      <TaskApp label="Firefox" running><FirefoxLogo /></TaskApp>
      <TaskApp label="Einstellungen" running><GearLogo /></TaskApp>
      <TaskApp label="Systemsteuerung" running><ControlPanelLogo /></TaskApp>
      <div className="ml-auto flex items-center">
        <button aria-label="Malwarebytes">
          <svg width="20" height="18" viewBox="0 0 20 18">
            <path d="M3.500 0 10 8.500 16.500 0C19 2.500 20 5.500 20 9 20 13 18 16 15 17.500 16.500 14.500 16.500 11.500 15.500 9L10 16 4.500 9C3.500 11.500 3.500 14.500 5 17.500 2 16 0 13 0 9 0 5.500 1 2.500 3.500 0Z" fill="#1240d8" />
          </svg>
        </button>
        <button aria-label="WLAN" className="ml-[13px] mt-px">
          <svg width="16" height="16" viewBox="0 0 16 16" fill="none" stroke="#e8e8e8" strokeWidth="1.300">
            <path d="M1 15A14 14 0 0 1 15 1M5 15A10 10 0 0 1 15 5M9 15A6 6 0 0 1 15 9" />
            <circle cx="13.800" cy="14" r="1.200" fill="#e8e8e8" />
          </svg>
        </button>
        <button aria-label="Lautstärke" className="ml-[11px]">
          <svg width="21" height="18" viewBox="0 0 21 18" fill="none" stroke="#fff" strokeWidth="1.200">
            <path d="M.6 6H3L7 2V16L3 12H.6ZM10 6.500Q12 9 10 11.500M13 4.500Q16.500 9 13 13.500M16.500 1.500Q22 9 16.500 16.500" />
          </svg>
        </button>
        <button aria-label="Akku" className="ml-[10px] mt-px">
          <svg width="19" height="12" viewBox="0 0 19 12">
            <path d="M.7 1.200H16.300V10.800H.7Z" fill="none" stroke="#fff" strokeWidth="1.300" />
            <path d="M2.500 3H11.500V9H2.500ZM17 4H19V8H17Z" fill="#fff" />
          </svg>
        </button>
        <time className="ml-[10px] w-[76px] text-center text-[14px] leading-[23px]">
          23:47
          <br />
          31.05.2021
        </time>
        <button aria-label="Info-Center" className="ml-5">
          <svg width="20" height="20" viewBox="0 0 20 20" fill="none" stroke="#fff" strokeWidth="1.200">
            <path d="M.6 .6H19.400V16H12.500L10 18.800 7.500 16H.6Z" />
          </svg>
        </button>
        <button aria-label="Desktop anzeigen" className="ml-6 h-[50px] w-[7px] border-l border-[#6b6b6b]" />
      </div>
    </div>
  );
}

export default function App() {
  return (
    <div className="flex h-screen flex-col overflow-hidden bg-[#191919] font-['Noto_Sans',sans-serif]">
      <TitleBar />
      <Tabs />
      <Ribbon />
      <AddressRow />
      <Content />
      <StatusBar />
      <Taskbar />
    </div>
  );
}
